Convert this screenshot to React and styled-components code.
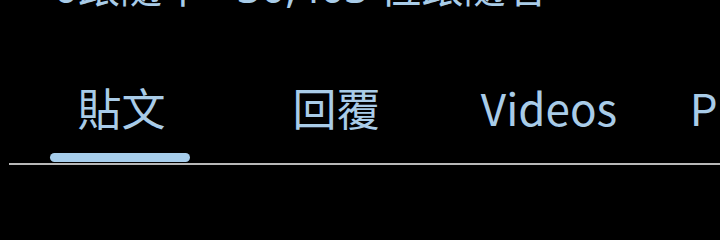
import React from "react";
import styled, { createGlobalStyle } from "styled-components";

const Global = createGlobalStyle`
  html, body { margin: 0; padding: 0; background: #000; }
  #root { background: #000; }
`;

const Page = styled.div`
  width: 720px;
  height: 200px;
  overflow: hidden;
  background: #000;
  font-family: "Noto Sans CJK TC", "Noto Sans", sans-serif;
  color: #a9cce8;
`;

const Stats = styled.div`
  font-family: "Noto Sans", "Noto Sans CJK TC", sans-serif;
  font-size: 42px;
  line-height: 44px;
  margin-top: -35px;
  padding-left: 54px;
  white-space: nowrap;
`;

const TabBar = styled.div`
  display: flex;
  padding-left: 12px;
  margin-top: 68px;
  white-space: nowrap;
`;

const Tab = styled.div`
  flex: 0 0 ${(p) => p.$w}px;
  display: flex;
  justify-content: center;
`;

const TabInner = styled.div`
  display: flex;
  flex-direction: column;
  align-items: stretch;
`;

const Label = styled.span`
  font-size: 44px;
  line-height: 60px;
  padding: 0 24px 0 28px;
  text-align: center;
  color: #a9cce8;
`;

const Indicator = styled.div`
  height: 9px;
  margin-top: 16px;
  border-radius: 5px;
  background: ${(p) => (p.$active ? "#a6cdeb" : "transparent")};
`;

const Divider = styled.div`
  height: 2px;
  margin-left: 9px;
  margin-top: 1px;
  background: #b8b8b8;
`;

const tabs = [
  { t: "貼文", w: 215 },
  { t: "回覆", w: 215 },
  { t: "Videos", w: 210 },
  { t: "Photos", w: 215 },
];

export default function App() {
  return (
    <Page>
      <Global />
      <Stats>0跟隨中 · 30,403 位跟隨者</Stats>
      <TabBar>
        {tabs.map((x, i) => (
          <Tab key={x.t} $w={x.w}>
            <TabInner>
              <Label>{x.t}</Label>
              <Indicator $active={i === 0} />
            </TabInner>
          </Tab>
        ))}
      </TabBar>
      <Divider />
    </Page>
  );
}
